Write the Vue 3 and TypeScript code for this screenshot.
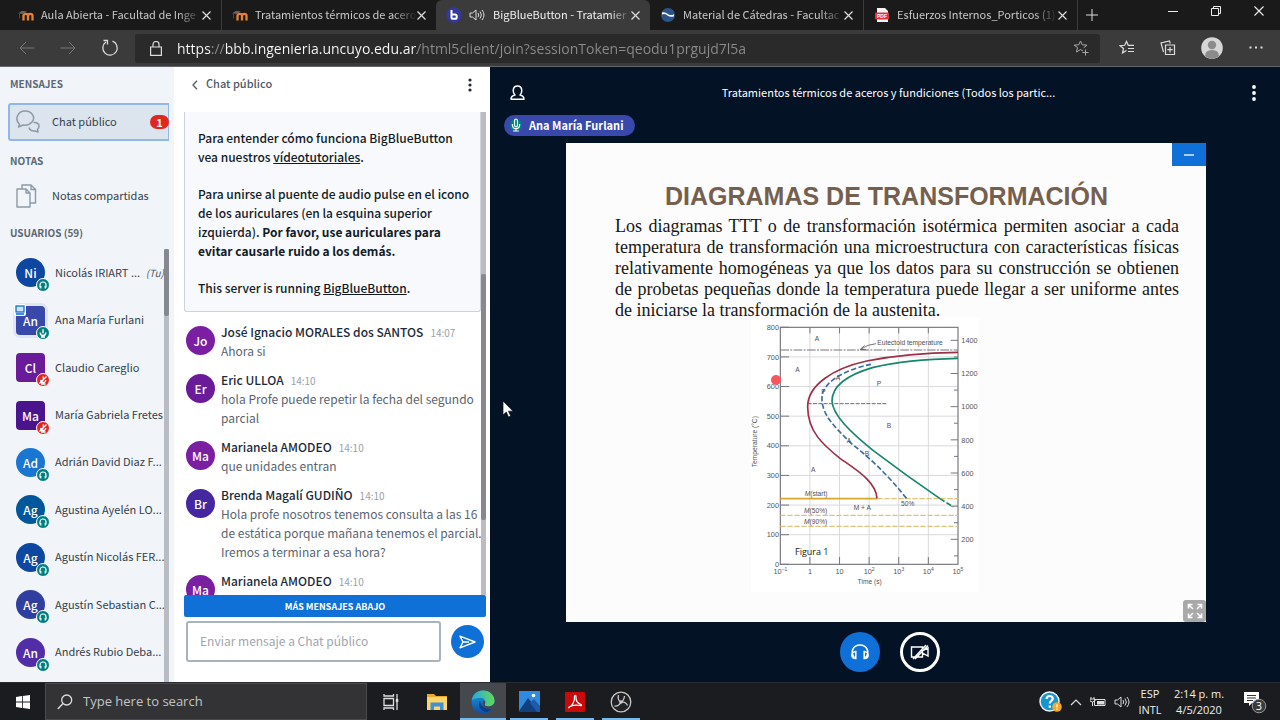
<script setup lang="ts">
interface Tab {
  title: string
  icon: 'moodle' | 'bbb' | 'wave' | 'pdf'
  active?: boolean
}
interface User {
  initials: string
  name: string
  color: string
  status: 'audio' | 'voice' | 'muted'
  moderator?: boolean
  presenter?: boolean
  you?: boolean
}
interface Message {
  initials: string
  author: string
  time: string
  color: string
  text?: string
}

const tabs: Tab[] = [
  { title: 'Aula Abierta - Facultad de Inge', icon: 'moodle' },
  { title: 'Tratamientos térmicos de acero', icon: 'moodle' },
  { title: 'BigBlueButton - Tratamier', icon: 'bbb', active: true },
  { title: 'Material de Cátedras - Facultac', icon: 'wave' },
  { title: 'Esfuerzos Internos_Porticos (1)', icon: 'pdf' },
]

const users: User[] = [
  { initials: 'Ni', name: 'Nicolás IRIART ...', color: '#0d47a1', status: 'audio', you: true },
  { initials: 'An', name: 'Ana María Furlani', color: '#3949ab', status: 'voice', moderator: true, presenter: true },
  { initials: 'Cl', name: 'Claudio Careglio', color: '#6a1b9a', status: 'muted', moderator: true },
  { initials: 'Ma', name: 'María Gabriela Fretes', color: '#4a148c', status: 'muted', moderator: true },
  { initials: 'Ad', name: 'Adrián David Diaz F...', color: '#1976d2', status: 'audio' },
  { initials: 'Ag', name: 'Agustina Ayelén LO...', color: '#01579b', status: 'audio' },
  { initials: 'Ag', name: 'Agustín Nicolás FER...', color: '#0d47a1', status: 'audio' },
  { initials: 'Ag', name: 'Agustín Sebastian C...', color: '#303f9f', status: 'audio' },
  { initials: 'An', name: 'Andrés Rubio Deba...', color: '#512da8', status: 'audio' },
]

const messages: Message[] = [
  { initials: 'Jo', author: 'José Ignacio MORALES dos SANTOS', time: '14:07', color: '#7b1fa2', text: 'Ahora si' },
  { initials: 'Er', author: 'Eric ULLOA', time: '14:10', color: '#6a1b9a', text: 'hola Profe puede repetir la fecha del segundo parcial' },
  { initials: 'Ma', author: 'Marianela AMODEO', time: '14:10', color: '#7b1fa2', text: 'que unidades entran' },
  { initials: 'Br', author: 'Brenda Magalí GUDIÑO', time: '14:10', color: '#4527a0', text: 'Hola profe nosotros tenemos consulta a las 16 de estática porque mañana tenemos el parcial. Iremos a terminar a esa hora?' },
  { initials: 'Ma', author: 'Marianela AMODEO', time: '14:10', color: '#7b1fa2' },
]

const celsius = [0, 100, 200, 300, 400, 500, 600, 700, 800]
const fahrenheit = [200, 400, 600, 800, 1000, 1200, 1400]
const decades = [
  { base: '10', exp: '–1' },
  { base: '1', exp: '' },
  { base: '10', exp: '' },
  { base: '10', exp: '2' },
  { base: '10', exp: '3' },
  { base: '10', exp: '4' },
  { base: '10', exp: '5' },
]
const yC = (t: number): number => 748 - t * 0.889
const yF = (t: number): number => 673 - (t - 200) * 0.4975
const xD = (i: number): number => 121 + i * 88.8

const url = 'https://bbb.ingenieria.uncuyo.edu.ar/html5client/join?sessionToken=qeodu1prgujd7l5a'
</script>

<template>
  <div class="screen">
    <header class="tabs">
      <div v-for="(tab, i) in tabs" :key="i" class="tab" :class="{ active: tab.active }">
        <svg v-if="tab.icon === 'moodle'" class="fav" viewBox="0 0 16 16">
          <path d="M5.500 13.500V8.500M5.500 9q0-2.200 2.300-2.200T10 9v4.500M10 9q0-2.200 2.300-2.200T14.500 9v4.500" fill="none" stroke="#e8832f" stroke-width="2.300" />
          <path d="M0 6.500l4-2.800 5 .800-4 2.600z" fill="#6b625b" />
          <path d="M1.500 6.500v5" stroke="#4a443f" />
        </svg>
        <svg v-else-if="tab.icon === 'bbb'" class="fav" viewBox="0 0 16 16">
          <circle cx="8" cy="8" r="7.800" fill="#34389a" />
          <path d="M5.500 3v7.200q0 1.600 1.600 1.600h2q1.600 0 1.600-1.600V9q0-1.600-1.600-1.600H6" fill="none" stroke="#fff" stroke-width="2" />
        </svg>
        <svg v-else-if="tab.icon === 'wave'" class="fav" viewBox="0 0 16 16">
          <circle cx="8" cy="8" r="7" fill="#2c5488" />
          <path d="M2 5.500q3-1 5.500 1.300t6.500.400v2q-3.500 1.500-6.500-.800T2 7.500z" fill="#fff" />
        </svg>
        <svg v-else class="fav" viewBox="0 0 16 16">
          <path d="M3 1h8l3 3v11H3z" fill="#f4f4f4" />
          <rect x="1" y="5.500" width="14" height="7" rx="1" fill="#e0333c" />
          <text x="8" y="11" class="pdf-label">PDF</text>
        </svg>
        <svg v-if="tab.active" class="sound" viewBox="0 0 16 14">
          <path d="M1 5h2.500L7 2v10L3.500 9H1zM9 5q1.500 2 0 4M11 3.500q2.800 3.500 0 7M13 2q4 5 0 10" fill="none" stroke="#ddd" />
        </svg>
        <span class="tab-title">{{ tab.title }}</span>
        <button class="plain close" aria-label="Cerrar pestaña">
          <svg width="9" height="9" viewBox="0 0 9 9"><path d="M.5.5l8 8m0-8l-8 8" stroke="#ddd" stroke-width="1.200" /></svg>
        </button>
      </div>
      <button class="plain new-tab" aria-label="Nueva pestaña">
        <svg width="12" height="12" viewBox="0 0 12 12"><path d="M6 0v12M0 6h12" stroke="#ddd" /></svg>
      </button>
      <div class="window-controls">
        <button class="plain" aria-label="Minimizar"><svg width="10" height="10" viewBox="0 0 10 10"><path d="M0 5.500h10" stroke="#eee" /></svg></button>
        <button class="plain" aria-label="Restaurar"><svg width="10" height="10" viewBox="0 0 10 10"><path d="M.5 2.500h7v7h-7zM2.500 2V.5h7v7H8" fill="none" stroke="#eee" /></svg></button>
        <button class="plain" aria-label="Cerrar"><svg width="10" height="10" viewBox="0 0 10 10"><path d="M.5.5l9 9m0-9l-9 9" stroke="#eee" stroke-width="1.100" /></svg></button>
      </div>
    </header>

    <nav class="toolbar">
      <div class="nav-buttons">
        <button class="plain" aria-label="Atrás"><svg width="16" height="14" viewBox="0 0 16 14"><path d="M15.500 7H1M7 1L1 7l6 6" fill="none" stroke="#777" /></svg></button>
        <button class="plain" aria-label="Adelante"><svg width="16" height="14" viewBox="0 0 16 14"><path d="M.5 7H15M9 1l6 6-6 6" fill="none" stroke="#777" /></svg></button>
        <button class="plain" aria-label="Recargar"><svg width="18" height="18" viewBox="0 0 18 18"><path d="M11.500 2.200A7.200 7.200 0 1 1 5 3M2.500 1.500h4v4" fill="none" stroke="#ddd" stroke-width="1.300" /></svg></button>
      </div>
      <div class="address">
        <svg width="12" height="15" viewBox="0 0 12 15"><path d="M.6 6h10.800v8.400H.6zM3 6V3.500a3 3 0 0 1 6 0V6" fill="none" stroke="#ddd" stroke-width="1.200" /></svg>
        <input class="url" type="text" aria-label="Dirección" :value="url" />
        <button class="plain" aria-label="Agregar a favoritos"><svg width="16" height="16" viewBox="0 0 16 16"><path d="M10 11l-2.500-1.500L3.500 12l1-4.500L1 5.200l4.700-.4L7.500 1l1.800 3.800 4.700.4-3.300 2.600M12.500 9.500v6M9.500 12.500h6" fill="none" stroke="#aaa" /></svg></button>
      </div>
      <div class="tool-buttons">
        <button class="plain" aria-label="Favoritos"><svg width="16" height="16" viewBox="0 0 16 16"><path d="M7.500 10.500L3.500 13l1-4.500L1 5.700l4.700-.4L7.500 1.500l1.800 3.800H15M9 8.500h6M9 11.500h6" fill="none" stroke="#ddd" stroke-width="1.200" /></svg></button>
        <button class="plain" aria-label="Colecciones"><svg width="16" height="16" viewBox="0 0 16 16"><path d="M5.500 5h9v9.500h-9zM10 7v5.500M7.300 9.700h5.400M3.500 12L1 3l8.500-2 .7 2.500" fill="none" stroke="#ddd" stroke-width="1.200" /></svg></button>
        <button class="plain" aria-label="Perfil"><svg width="22" height="22" viewBox="0 0 22 22"><circle cx="11" cy="11" r="10.800" fill="#d6d6d6" /><circle cx="11" cy="8" r="4.200" fill="#8b8b8b" /><path d="M4 19q0-6 7-6t7 6q-3 2.800-7 2.800T4 19z" fill="#8b8b8b" /></svg></button>
        <button class="plain" aria-label="Más"><svg width="16" height="16" viewBox="0 0 16 16"><path d="M1.500 7.500h2m3.500 0h2m3.500 0h2" stroke="#ddd" stroke-width="2" /></svg></button>
      </div>
    </nav>

    <main class="app">
      <aside class="sidebar">
        <h2>MENSAJES</h2>
        <button class="side-item selected">
          <svg width="24" height="24" viewBox="0 0 24 24"><path d="M3.500 14.500C-2 9 2 1 9 1s11 6.500 7 11q-3.500 4-9 3l-4.500 2zM17.500 12.500q5-.5 5.500 3.500 0 2-1.500 3.500l.5 2.500-3-1q-5 .5-6-3.500" fill="none" stroke="#8b9aa8" stroke-width="1.500" stroke-linejoin="round" /></svg>
          <span class="label">Chat público</span>
          <span class="count">1</span>
        </button>
        <h2>NOTAS</h2>
        <button class="side-item">
          <svg width="24" height="24" viewBox="0 0 24 24"><path d="M1 5h9l4 4v14H1zM10 5v4h4M6 5V1h9l4.500 4.500V19H14M15 1v4.500h4.500" fill="none" stroke="#8b9aa8" stroke-width="1.400" stroke-linejoin="round" /></svg>
          <span class="label">Notas compartidas</span>
        </button>
        <h2>USUARIOS (59)</h2>
        <div class="user-scroll">
          <ul>
            <li v-for="(u, i) in users" :key="i">
              <span class="avatar" :class="{ square: u.moderator, halo: u.presenter }" :style="{ backgroundColor: u.color }">
                {{ u.initials }}
                <svg v-if="u.presenter" class="presenter" viewBox="0 0 12 12"><rect width="12" height="12" rx="2" fill="#fff" /><rect x="2" y="2" width="8" height="6" fill="#cfe3fa" stroke="#0f70d7" stroke-width="1.300" /><path d="M2 10h8" stroke="#0f70d7" stroke-width="1.600" /></svg>
                <svg class="status" viewBox="0 0 14 14">
                  <circle cx="7" cy="7" r="6.500" :fill="u.status === 'muted' ? '#df2721' : '#008081'" stroke="#fff" />
                  <path v-if="u.status === 'audio'" d="M4 9.500V7a3 3 0 0 1 6 0v2.500M4.800 8v2.500M9.200 8v2.500" fill="none" stroke="#fff" stroke-width="1.200" />
                  <path v-else-if="u.status === 'voice'" d="M7 3.300v3.900M4.200 6.500q0 3 2.800 3t2.800-3M7 9.500v1.500M5 11h4" fill="none" stroke="#fff" stroke-width="1.400" />
                  <path v-else d="M7.300 3.500v4M4.500 7q.5 2.500 2.800 2.500T9.800 7M5 11h4.500M10.500 3.500l-7 7" fill="none" stroke="#fff" stroke-width="1.300" />
                </svg>
              </span>
              <span class="user-name">{{ u.name }}</span>
              <em v-if="u.you">(Tu)</em>
            </li>
          </ul>
          <div class="track"><div class="thumb"></div></div>
        </div>
      </aside>

      <section class="chat">
        <header>
          <button class="plain back">
            <svg width="6" height="10" viewBox="0 0 6 10"><path d="M5 .7L1 5l4 4.300" fill="none" stroke="#4e5a66" stroke-width="1.300" /></svg>
            <span>Chat público</span>
          </button>
          <button class="plain" aria-label="Opciones"><svg width="4" height="14" viewBox="0 0 4 14"><g fill="#1b2a3a"><circle cx="2" cy="2" r="1.600" /><circle cx="2" cy="7" r="1.600" /><circle cx="2" cy="12" r="1.600" /></g></svg></button>
        </header>
        <div class="chat-scroll">
          <div class="messages">
            <div class="welcome">
              <p>Para entender cómo funciona BigBlueButton vea nuestros <a href="#">vídeotutoriales</a>.</p>
              <p>Para unirse al puente de audio pulse en el icono de los auriculares (en la esquina superior izquierda). <b>Por favor, use auriculares para evitar causarle ruido a los demás.</b></p>
              <p>This server is running <a href="#">BigBlueButton</a>.</p>
            </div>
            <article v-for="(m, i) in messages" :key="i" class="message">
              <span class="avatar" :style="{ backgroundColor: m.color }">{{ m.initials }}</span>
              <div>
                <div class="meta"><strong>{{ m.author }}</strong><time>{{ m.time }}</time></div>
                <p v-if="m.text">{{ m.text }}</p>
              </div>
            </article>
          </div>
          <div class="track"><div class="thumb"></div></div>
        </div>
        <button class="more">MÁS MENSAJES ABAJO</button>
        <form class="compose" @submit.prevent>
          <input type="text" aria-label="Mensaje" placeholder="Enviar mensaje a Chat público" />
          <button aria-label="Enviar"><svg width="17" height="14" viewBox="0 0 17 14"><path d="M1 1.200L16 7 1 12.800 4 7zM4 7h6" fill="none" stroke="#fff" stroke-width="1.400" stroke-linejoin="round" /></svg></button>
        </form>
      </section>

      <section class="meeting">
        <header>
          <button class="plain" aria-label="Usuarios"><svg width="15" height="15" viewBox="0 0 15 15"><path d="M1 14.200q0-3.200 4-4.200-1.800-1.600-1.800-4.500Q3.400 1 7.500 1t4.300 4.500q0 2.900-1.800 4.500 4 1 4 4.200z" fill="none" stroke="#fff" stroke-width="1.500" stroke-linejoin="round" /></svg></button>
          <h1>Tratamientos térmicos de aceros y fundiciones (Todos los partic...</h1>
          <button class="plain" aria-label="Opciones"><svg width="4" height="16" viewBox="0 0 4 16"><g fill="#fff"><circle cx="2" cy="2" r="1.900" /><circle cx="2" cy="8" r="1.900" /><circle cx="2" cy="14" r="1.900" /></g></svg></button>
        </header>
        <div class="talking">
          <button class="speaker">
            <svg width="12" height="14" viewBox="0 0 12 14"><circle cx="6" cy="7" r="6" fill="#008081" /><path d="M4.500 3.200q0-2 1.500-2t1.500 2v3.600q0 2-1.500 2t-1.500-2zM2.300 6q0 4.700 3.700 4.700T9.700 6M6 10.700V13M3 13h6" fill="none" stroke="#e8fffa" stroke-width="1.200" /></svg>
            Ana María Furlani
          </button>
        </div>
        <div class="stage">
          <div class="slide">
            <h2>DIAGRAMAS DE TRANSFORMACIÓN</h2>
            <p>Los diagramas TTT o de transformación isotérmica permiten asociar a cada temperatura de transformación una microestructura con características físicas relativamente homogéneas ya que los datos para su construcción se obtienen de probetas pequeñas donde la temperatura puede llegar a ser uniforme antes de iniciarse la transformación de la austenita.</p>
            <svg class="chart" viewBox="33 9 684 822">
              <rect x="33" y="9" width="684" height="822" fill="#fff" />
              <g stroke="#d9d9dc" stroke-width="3">
                <path v-for="t in celsius.slice(1, 8)" :key="'h' + t" :d="`M121 ${yC(t)}H654`" />
                <path v-for="i in 5" :key="'v' + i" :d="`M${xD(i)} 37V748`" />
              </g>
              <rect x="121" y="37" width="533" height="711" fill="none" stroke="#77777c" stroke-width="3.500" />
              <g stroke="#77777c" stroke-width="3">
                <path v-for="t in celsius" :key="'c' + t" :d="`M121 ${yC(t)}h26`" />
                <path v-for="t in fahrenheit" :key="'f' + t" :d="`M654 ${yF(t)}h-22M654 ${yF(t) + 49.700}h-12`" />
                <path v-for="i in 5" :key="'d' + i" :d="`M${xD(i)} 748v-22M${xD(i)} 37v18`" />
              </g>
              <g class="axis">
                <text v-for="t in celsius" :key="'ct' + t" x="117" :y="yC(t) + 8" text-anchor="end">{{ t }}</text>
                <text v-for="t in fahrenheit" :key="'ft' + t" x="664" :y="yF(t) + 8">{{ t }}</text>
                <text v-for="(d, i) in decades" :key="'dt' + i" :x="xD(i)" y="778" text-anchor="middle">{{ d.base }}<tspan dy="-9">{{ d.exp }}</tspan></text>
                <text x="389" y="808" text-anchor="middle" class="axis-title">Time (s)</text>
                <text transform="translate(51 380) rotate(-90)" text-anchor="middle" class="axis-title">Temperature (°C)</text>
              </g>
              <path d="M121 105H654" stroke="#77777c" stroke-width="3" stroke-dasharray="26 4 6 4" />
              <path d="M408 86q-26 2-46 17m12-12l-13 12 17 1" fill="none" stroke="#555" stroke-width="2.500" />
              <path d="M203 266H440" stroke="#6a6a72" stroke-width="3" stroke-dasharray="12 4" />
              <path d="M121 601H654M121 634H654M412 551H654" stroke="#e3c07c" stroke-width="3.500" stroke-dasharray="16 5" />
              <path d="M121 551H412" stroke="#dca52e" stroke-width="5" />
              <path d="M654 112C560 113 480 118 380 138C280 160 203 210 203 275C203 350 250 390 300 430C350 465 408 500 411 550" fill="none" stroke="#9c3046" stroke-width="5" />
              <path d="M393 148C330 160 250 195 246 245C243 300 285 335 330 382C390 430 440 475 500 551" fill="none" stroke="#3c6f9f" stroke-width="5" stroke-dasharray="16 7" />
              <path d="M654 130C560 132 480 138 400 157C320 180 276 215 276 258C278 300 330 350 400 407C470 460 540 510 600 551" fill="none" stroke="#16866d" stroke-width="5" />
              <path d="M600 551L640 576" stroke="#16866d" stroke-width="5" stroke-dasharray="16 7" />
              <g class="note">
                <text x="224" y="78">A</text><text x="166" y="171">A</text><text x="213" y="472">A</text>
                <text x="410" y="213">P</text><text x="440" y="339">B</text>
                <text x="287" y="195">A</text><text x="244" y="237">P</text><text x="320" y="385">A</text><text x="374" y="423">B</text>
                <text x="412" y="90">Eutectoid temperature</text>
                <text x="194" y="544"><tspan font-style="italic">M</tspan>(start)</text>
                <text x="192" y="595"><tspan font-style="italic">M</tspan>(50%)</text>
                <text x="192" y="627"><tspan font-style="italic">M</tspan>(90%)</text>
                <text x="341" y="584">M + A</text>
                <text x="483" y="572">50%</text>
              </g>
              <text x="165" y="721" class="figure">Figura 1</text>
            </svg>
            <span class="pointer"></span>
            <button class="minimize" aria-label="Minimizar presentación"><svg width="10" height="2" viewBox="0 0 10 2"><path d="M0 1h10" stroke="#fff" stroke-width="1.300" /></svg></button>
            <button class="fullscreen" aria-label="Pantalla completa"><svg width="16" height="16" viewBox="0 0 16 16"><path d="M1.500 5.500v-4h4M10.500 1.500h4v4M14.500 10.500v4h-4M5.500 14.500h-4v-4M2 2l4 4M14 2l-4 4M14 14l-4-4M2 14l4-4" fill="none" stroke="#fff" stroke-width="1.600" /></svg></button>
          </div>
        </div>
        <footer>
          <button class="round audio" aria-label="Audio"><svg width="20" height="16" viewBox="0 0 20 16"><path d="M4.500 13.500C-.5 8 3.500 1 10 1s10.500 7 5.500 12.500M5.800 7.500v7q-3.800 0-4-3.300.2-3.200 4-3.700zM14.200 7.500v7q3.800 0 4-3.300-.2-3.200-4-3.700z" fill="none" stroke="#fff" stroke-width="1.500" /></svg></button>
          <button class="round camera" aria-label="Cámara"><svg width="20" height="16" viewBox="0 0 20 16"><path d="M1.500 3h11v10h-11zM12.500 7L18 4v8l-5.500-3M3 15L16 1M5 15L18 1.500" fill="none" stroke="#fff" stroke-width="1.400" /></svg></button>
        </footer>
      </section>
      <svg class="cursor" viewBox="0 0 12 18"><path d="M1 1v14l3.300-3 2.200 5 2.200-1-2.200-4.800H11z" fill="#fff" stroke="#111" stroke-width=".7" /></svg>
    </main>

    <footer class="taskbar">
      <button class="plain start" aria-label="Inicio"><svg width="14" height="14" viewBox="0 0 14 14"><path d="M0 2l6-.9v5.500H0zM6.800 1L14 0v6.600H6.800zM0 7.400h6v5.500L0 12zM6.800 7.400H14V14l-7.200-1z" fill="#fff" /></svg></button>
      <label class="search">
        <svg width="16" height="16" viewBox="0 0 16 16"><circle cx="9.700" cy="6" r="5" fill="none" stroke="#ddd" stroke-width="1.300" /><path d="M6 9.600L.8 15" stroke="#ddd" stroke-width="1.400" /></svg>
        <input type="text" aria-label="Buscar" placeholder="Type here to search" />
      </label>
      <div class="pinned">
        <button class="plain" aria-label="Vista de tareas"><svg width="16" height="16" viewBox="0 0 16 16"><path d="M1 4.500h9.500v7H1zM1 0v2h9.500V0M1 16v-2h9.500v2M14 0v16" fill="none" stroke="#ddd" stroke-width="1.300" /><path d="M12.800 5h2.500v3h-2.500z" fill="#ddd" /></svg></button>
        <button class="plain" aria-label="Explorador"><svg width="20" height="18" viewBox="0 0 20 18"><path d="M0 1h7l2 2h11v14H0z" fill="#e9a92b" /><path d="M0 4h20v13H0z" fill="#fdd568" /><path d="M3.500 17V9.500h13V17h-3.500v-3.500H7V17z" fill="#3f90d6" /></svg></button>
        <button class="plain current open" aria-label="Edge">
          <svg width="24" height="24" viewBox="0 0 24 24">
            <defs>
              <linearGradient id="edgeTop" x1="0" x2="1"><stop offset="0" stop-color="#2aa7e0" /><stop offset="1" stop-color="#62d957" /></linearGradient>
              <linearGradient id="edgeBody" x1="0" y1="0" x2="0" y2="1"><stop offset="0" stop-color="#1b9de2" /><stop offset="1" stop-color="#0c4fa8" /></linearGradient>
            </defs>
            <circle cx="12" cy="12" r="11.500" fill="url(#edgeBody)" />
            <path d="M.8 10C2 4 6.500.5 12 .5c7 0 11.500 5 11.500 10 0 4-3 6-6.300 6-2.700 0-4-1.200-3.400-2.300 1.700-3-.3-6.500-4.300-6.500-3.500 0-6.500 1-8.700 2.300z" fill="url(#edgeTop)" />
            <path d="M9 10.500c-3 6 1.500 11.500 7 11.500 2.500-.8 4-2 5.500-4-6 2-12-1-12.500-7.500z" fill="#0a3f8c" />
            <path d="M13.800 14.200c-.6 1.100.7 2.300 3.400 2.300 2.300 0 4.600-1 5.800-2.700 0 1.800-.8 3.600-1.800 4.700-3 1.500-9 .5-9.700-4.500-.300-1.800.5-3 1.500-3.500 1.300.7 1.500 2.500.8 3.700z" fill="#45484d" />
          </svg>
        </button>
        <button class="plain open" aria-label="Fotos"><svg width="21" height="21" viewBox="0 0 21 21"><path d="M0 0h21v21H0z" fill="#2f8be0" /><path d="M0 20L9 7l12 14H0z" fill="#123f7d" /><path d="M11 12l4-4 6 7v6h-3z" fill="#1d5cab" /><circle cx="14.500" cy="4.500" r="1.800" fill="#fff" /></svg></button>
        <button class="plain open" aria-label="Acrobat"><svg width="20" height="20" viewBox="0 0 20 20"><rect width="20" height="20" rx="1" fill="#c80a0a" /><path d="M4 15.500c3-1 6-6.500 5.500-11 0-1.500 1.700-1.500 1.500.5-.3 3.500 2 6.500 5 7.500 1 .5.500 1.500-1 1-3-.7-6.500-.5-9.500.8-1.500.7-2.500 1.800-1.500 1.200z" fill="none" stroke="#fff" stroke-width="1.200" /></svg></button>
        <button class="plain open" aria-label="OBS"><svg width="22" height="22" viewBox="0 0 22 22"><circle cx="11" cy="11" r="9.800" fill="#222226" stroke="#c9c9c9" stroke-width="1.300" /><path d="M8.500 4q-1.500 5 2.500 7 4.500-.5 6.500 3.500M11 11q-2 4.500-6.500 4M11 11q3-1.500 3.500-6" fill="none" stroke="#c9c9c9" stroke-width="1.300" /><circle cx="11" cy="11" r="1.800" fill="#c9c9c9" /></svg></button>
      </div>
      <div class="tray">
        <svg width="23" height="22" viewBox="0 0 23 22"><circle cx="10.500" cy="10.500" r="9.500" fill="#1795cf" stroke="#e8f4fa" stroke-width="1.500" /><path d="M7.500 8q.3-3 3.200-3t3.100 2.600c0 2.400-3 2.300-3 5M10.800 14.500v2.200" fill="none" stroke="#fff" stroke-width="2.200" /><circle cx="18" cy="16" r="4.800" fill="#f0a92c" /><path d="M18 13.300v3.200m0 1v1.300" stroke="#fff" stroke-width="1.200" /></svg>
        <svg width="12" height="8" viewBox="0 0 12 8"><path d="M1 7l5-5 5 5" fill="none" stroke="#ddd" stroke-width="1.200" /></svg>
        <svg width="16" height="12" viewBox="0 0 16 12"><path d="M4.500 3.500h10.500v6H4.500zM1 1v2M4 1v2M0 3h5v2q-2.500 2-5 0zM2.500 6v4" fill="none" stroke="#ddd" /><path d="M7 5h7v3.500H7z" fill="#ddd" /></svg>
        <svg width="16" height="14" viewBox="0 0 16 14"><path d="M1 5h2.500L7 2v10L3.500 9H1zM9 5q1.500 2 0 4M11 3.500q2.800 3.500 0 7M13 2q4 5 0 10" fill="none" stroke="#ddd" /></svg>
        <div class="lang"><span>ESP</span><span>INTL</span></div>
        <div class="clock"><span>2:14 p. m.</span><span>4/5/2020</span></div>
        <button class="plain alerts" aria-label="Notificaciones">
          <svg width="23" height="24" viewBox="0 0 23 24"><path d="M0 2h15v11H8l-3 3v-3H0z" fill="#fff" /><path d="M3 5.500h9M3 8h9M3 10.500h6" stroke="#333" /><circle cx="15" cy="16" r="6.800" fill="#3a3a3d" stroke="#9a9a9a" /><text x="15" y="20" class="alert-count">3</text></svg>
        </button>
      </div>
    </footer>
  </div>
</template>

<style>
body { margin: 0; background: #1b1c20; }
</style>

<style scoped>
* { box-sizing: border-box; }
h1, h2, p, ul { margin: 0; padding: 0; }
svg { display: block; flex: none; }
button, input { font: inherit; color: inherit; margin: 0; padding: 0; border: 0; }
.plain { background: none; display: flex; align-items: center; justify-content: center; }

.screen { display: flex; flex-direction: column; height: 100vh; overflow: hidden; font-family: "Noto Sans CJK SC", "Open Sans", sans-serif; font-size: 12px; line-height: 19px; }

.tabs { flex: none; height: 30px; display: flex; padding-left: 8px; background: #1a1a1a; color: #c9c9c9; font-size: 11px; }
.tab { flex: 0 1 214px; min-width: 0; display: flex; align-items: center; padding: 0 10px; border-right: 1px solid #3c3c3c; }
.tab.active { background: #3b3b3b; color: #f0f0f0; border-radius: 6px 6px 0 0; border-right: 0; }
.tab:has(+ .active) { border-right: 0; }
.fav { width: 16px; height: 16px; margin-right: 7px; }
.pdf-label { font: bold 5px "Liberation Sans", sans-serif; fill: #fff; text-anchor: middle; }
.sound { width: 16px; height: 14px; margin-right: 8px; }
.tab-title { flex: 1; min-width: 0; white-space: nowrap; overflow: hidden; padding-bottom: 1px; -webkit-mask-image: linear-gradient(90deg, #000 85%, transparent); mask-image: linear-gradient(90deg, #000 85%, transparent); }
.new-tab { width: 28px; }
.window-controls { margin-left: auto; display: flex; height: 22px; }
.window-controls button { width: 43px; }

.toolbar { flex: none; height: 36px; display: flex; align-items: center; background: #3b3b3b; padding-right: 16px; }
.nav-buttons { width: 135px; display: flex; gap: 25px; padding-left: 19px; align-items: center; }
.address { flex: 1; height: 29px; display: flex; align-items: center; gap: 15px; padding: 0 11px 0 15px; background: #2a2a2a; border-radius: 3px; }
.url { flex: 1; min-width: 0; height: 24px; outline: 0; color: #fff; font-family: "Open Sans", "Noto Sans", sans-serif; font-size: 14px; background: linear-gradient(90deg, #fff 34px, #8c8c8c 34px, #8c8c8c 48px, #fff 48px, #fff 240px, #8c8c8c 240px); -webkit-background-clip: text; background-clip: text; -webkit-text-fill-color: transparent; }
.tool-buttons { display: flex; align-items: center; gap: 25px; padding-left: 19px; }

.app { position: relative; flex: 1; min-height: 0; display: flex; border-top: 1px solid #63666c; }

.sidebar { flex: none; width: 174px; padding: 7px 5px 0 8px; background: #f1f4f9; color: #333f4d; font-size: 11px; display: flex; flex-direction: column; }
.sidebar h2 { font-size: 10px; line-height: 20px; font-weight: 600; color: #5b6775; padding-left: 2px; }
.side-item { height: 38px; display: flex; align-items: center; gap: 12px; padding-left: 8px; margin: 6px 0 8px; background: none; text-align: left; }
.side-item .label { flex: 1; white-space: nowrap; padding-bottom: 2px; }
.selected { margin: 9px 0 10px; background: #dce4ed; border: 2px solid #8fb8e6; border-right-width: 1px; border-radius: 3px 0 0 3px; padding-left: 6px; }
.count { background: #df2721; color: #fff; font-weight: 700; line-height: 14px; width: 19px; text-align: center; border-radius: 7px; margin-right: -1px; }
.user-scroll { flex: 1; min-height: 0; display: flex; margin-top: 6px; }
.user-scroll ul { flex: 1; min-width: 0; display: flex; flex-direction: column; padding-bottom: 6px; list-style: none; }
.user-scroll li { flex: 1; display: flex; align-items: center; padding-left: 8px; white-space: nowrap; }
.user-name { margin-left: 10px; flex: 1; padding-bottom: 1px; }
em { color: #4e5a66; font-size: 10px; }
.avatar { position: relative; flex: none; width: 29px; height: 29px; border-radius: 50%; display: flex; align-items: center; justify-content: center; color: #fff; font-size: 12px; font-weight: 500; }
.square { border-radius: 4px; }
.halo { box-shadow: 0 0 0 3px #dfe5f3; }
.status { position: absolute; width: 14px; height: 14px; right: -5px; bottom: -5px; }
.presenter { position: absolute; width: 12px; height: 12px; left: -2px; top: -2px; }

.track { flex: none; width: 5px; background: #b9bcc2; }
.thumb { background: #85888e; border-radius: 2px; }
.user-scroll .thumb { height: 67px; }
.chat-scroll .track { position: absolute; right: 0; top: 0; bottom: 0; }
.chat-scroll .thumb { height: 246px; margin-top: 162px; }

.chat { flex: none; width: 316px; background: #fff; padding: 0 4px 0 10px; display: flex; flex-direction: column; }
.chat header { height: 45px; padding: 0 14px 10px 8px; display: flex; align-items: center; justify-content: space-between; }
.back { gap: 8px; font-size: 11px; font-weight: 500; color: #4e5a66; }
.back span { padding-bottom: 2px; }
.chat-scroll { position: relative; flex: 1; min-height: 0; display: flex; }
.messages { flex: 1; min-width: 0; overflow: hidden; }
.welcome { display: flex; flex-direction: column; gap: 18px; margin-right: 5px; padding: 16px 6px 14px 13px; background: #f8f9fc; border: 1px solid #cdd2da; border-top: 0; border-radius: 0 0 3px 3px; color: #111b27; font-weight: 500; }
.welcome a { color: inherit; }
.message { display: flex; gap: 6px; margin-top: 10px; padding-left: 2px; color: #5a6470; }
.message > div { flex: 1; min-width: 0; }
.message .avatar { margin-top: 4px; }
.meta { height: 19px; display: flex; gap: 7px; align-items: baseline; white-space: nowrap; }
.meta strong { color: #1b2a3a; font-weight: 500; }
time { font-size: 10px; color: #9aa1aa; }
.more { flex: none; height: 22px; background: #0f70d7; color: #fff; border-radius: 2px; font-size: 9px; font-weight: 700; }
.compose { flex: none; height: 65px; padding: 4px 2px 20px; display: flex; align-items: center; gap: 10px; }
.compose input { flex: 1; min-width: 0; height: 41px; border: 2px solid #a7b3bd; border-radius: 3px; padding: 0 12px 2px; background: #fff; }
.compose input::placeholder { color: #a0a6ae; opacity: 1; }
.compose button { width: 33px; height: 33px; border-radius: 50%; background: #0f70d7; display: flex; align-items: center; justify-content: center; }

.meeting { flex: 1; min-width: 0; background: #041226; display: flex; flex-direction: column; color: #fff; font-size: 11px; }
.meeting header { height: 48px; padding: 3px 24px 0 20px; display: flex; align-items: center; justify-content: space-between; }
.meeting h1 { font-size: 11px; line-height: 19px; font-weight: 400; white-space: nowrap; padding-bottom: 1px; }
.talking { height: 28px; padding-left: 14px; }
.speaker { height: 21px; display: flex; align-items: center; gap: 7px; padding: 0 11px 1px 6px; border-radius: 11px; background: #3949ab; font-weight: 600; white-space: nowrap; }
.stage { flex: 1; min-height: 0; display: flex; justify-content: center; padding-left: 2px; }
.slide { position: relative; height: 100%; aspect-ratio: 640 / 479; padding: 38px 27px 0 49px; background: #fcfcfc; }
.slide h2 { font: bold 25px/30px "Liberation Sans", Arial, sans-serif; color: #75604f; white-space: nowrap; padding-left: 50px; }
.slide p { font: 18px/21px "Liberation Serif", "Times New Roman", serif; color: #161616; text-align: justify; margin-top: 5px; }
.chart { width: 228px; height: 274px; margin: -3px 0 0 136px; }
.axis text { fill: #55555a; font-family: "Liberation Sans", sans-serif; font-size: 22px; }
.axis tspan { font-size: 15px; }
.axis .axis-title { font-size: 20px; }
.note text { fill: #505056; font-family: "Liberation Sans", sans-serif; font-size: 20px; }
.figure { fill: #161616; font-family: "Open Sans", sans-serif; font-size: 27px; font-weight: 500; }
.pointer { position: absolute; left: 205px; top: 232px; width: 10px; height: 10px; border-radius: 50%; background: #f9555f; }
.minimize { position: absolute; right: 0; top: 0; width: 34px; height: 23px; background: #0f70d7; display: flex; align-items: center; justify-content: center; }
.fullscreen { position: absolute; right: 0; bottom: 0; width: 23px; height: 22px; background: #a9a9a9; border-radius: 3px; display: flex; align-items: center; justify-content: center; }
.meeting footer { flex: none; height: 60px; display: flex; align-items: center; justify-content: center; gap: 20px; padding-left: 10px; }
.round { width: 40px; height: 40px; border-radius: 50%; display: flex; align-items: center; justify-content: center; }
.audio { background: #0f70d7; }
.camera { background: none; border: 3px solid #fff; }
.cursor { position: absolute; left: 502px; top: 333px; width: 12px; height: 18px; }

.taskbar { flex: none; height: 38px; display: flex; background: #1b1c20; color: #eee; font-family: "Open Sans", "Noto Sans", sans-serif; border-top: 1px solid #2b2c30; }
.start { width: 45px; }
.search { width: 322px; display: flex; align-items: center; gap: 10px; padding-left: 11px; background: #333335; border: 1px solid #4a4a4c; }
.search input { flex: 1; min-width: 0; background: none; outline: 0; font-size: 13px; }
.search input::placeholder { color: #c4c4c4; opacity: 1; }
.pinned { display: flex; padding-left: 1px; }
.pinned button { width: 46px; position: relative; }
.pinned .open::after { content: ""; position: absolute; left: 4px; right: 4px; bottom: 0; height: 2px; background: #76b9ed; }
.pinned .current { background: #45484d; }
.pinned .current::after { left: 0; right: 0; }
.tray { margin-left: auto; display: flex; align-items: center; gap: 8px; padding-right: 13px; font-size: 11px; line-height: 16px; white-space: nowrap; }
.lang, .clock { display: flex; flex-direction: column; align-items: center; }
.lang { width: 24px; }
.clock { width: 58px; }
.alerts { margin-left: 8px; }
.alert-count { font: 11px "Open Sans", sans-serif; fill: #fff; text-anchor: middle; }
</style>
